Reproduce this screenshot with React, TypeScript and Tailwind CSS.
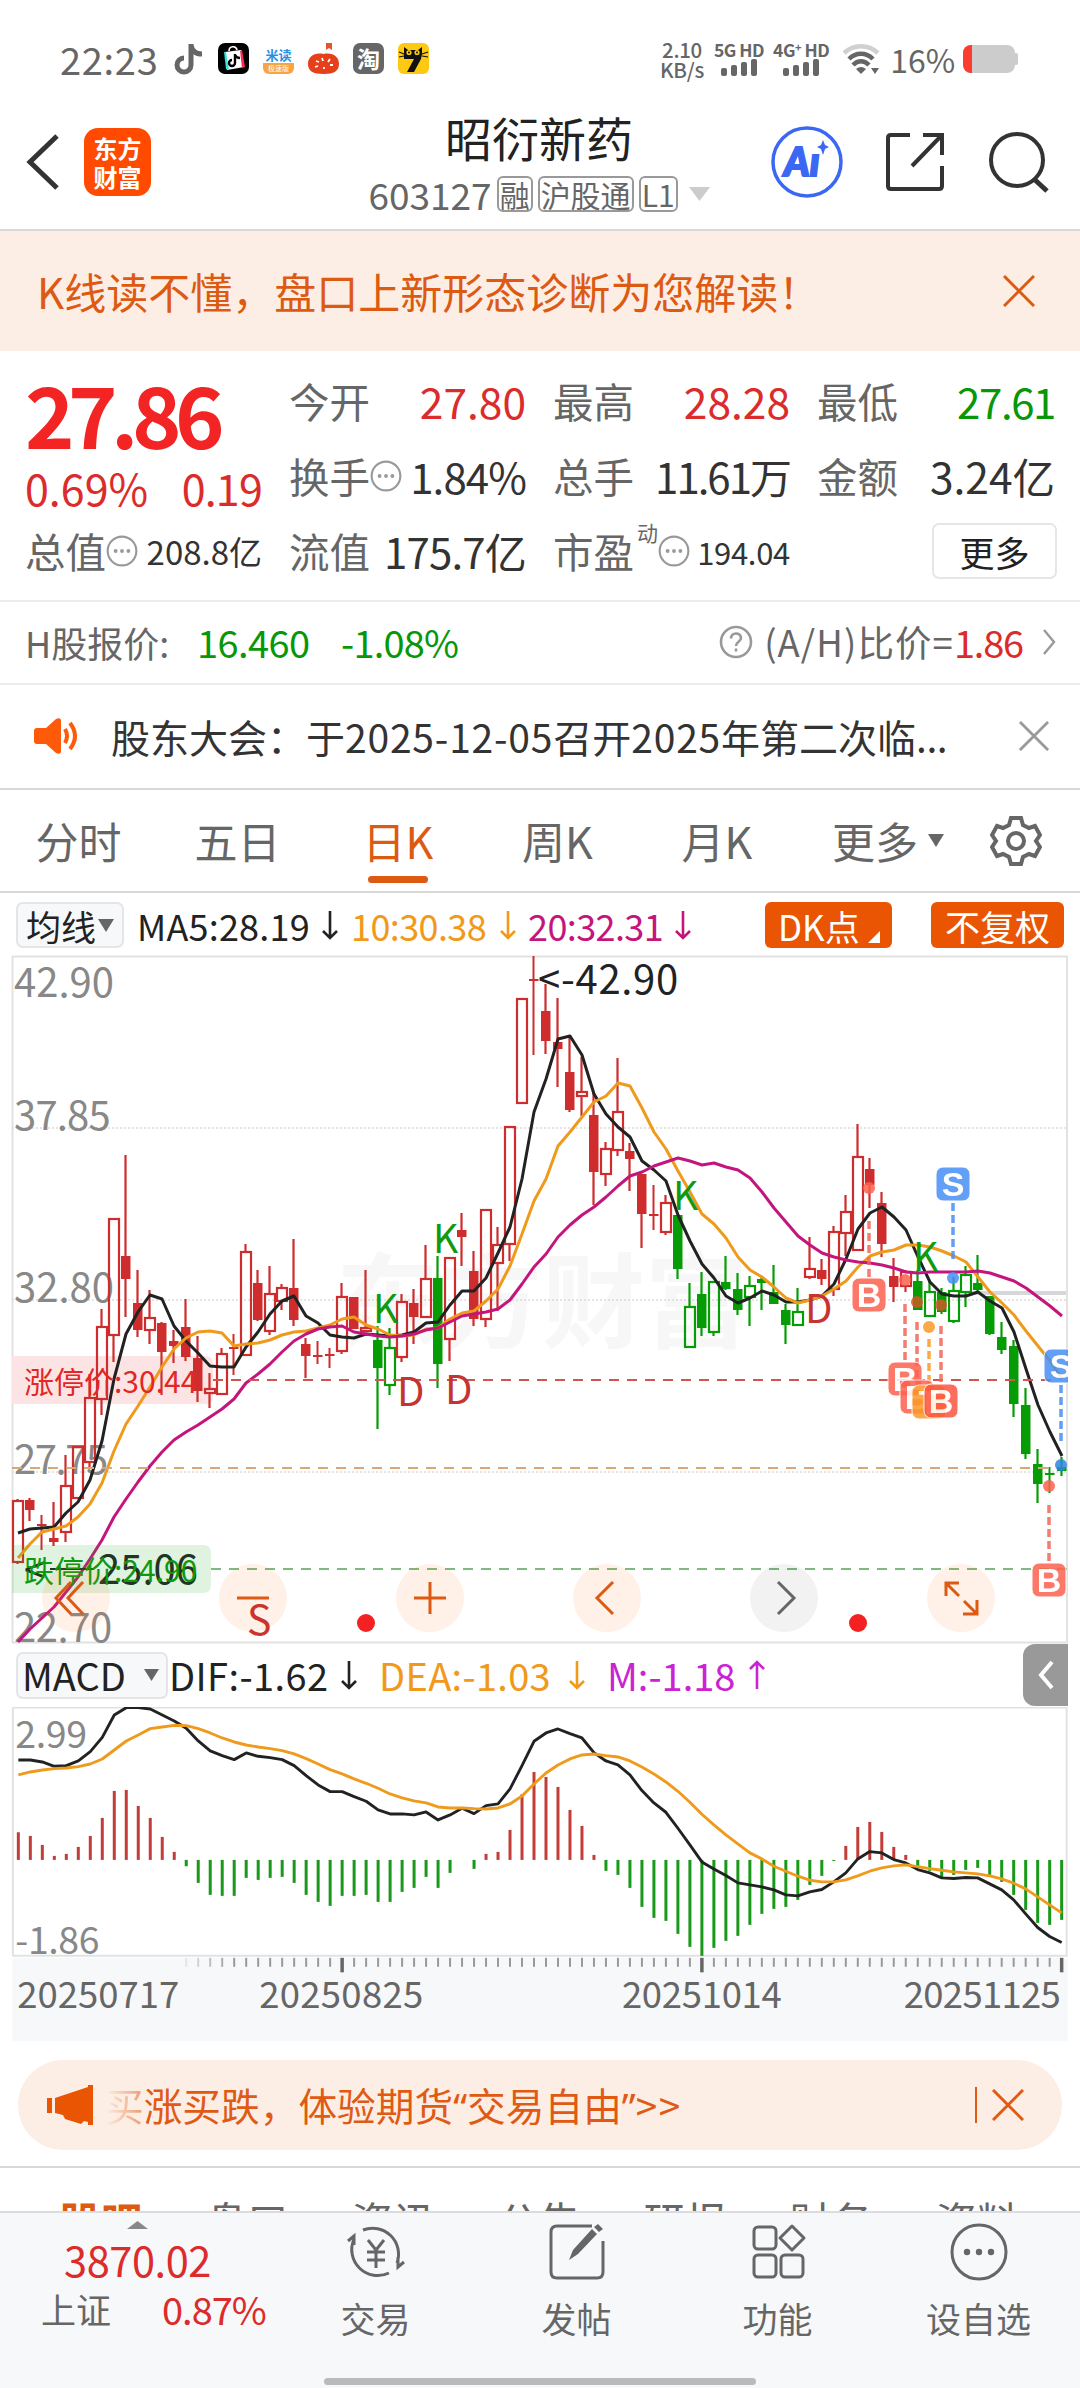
import React from 'react'

type Candle = [string, number, number, number, number]

// kind, high, body top, body bottom, low. Lowercase kinds are hollow bodies, 'x' and 'y' are dojis.
const candles: Candle[] = [
  ['r', 1500, 1502, 1563, 1565], ['R', 1499, 1501, 1511, 1522], ['x', 1516, 1526, 1526, 1551], ['R', 1503, 1539, 1543, 1547],
  ['r', 1456, 1487, 1533, 1543], ['r', 1447, 1448, 1499, 1500], ['r', 1375, 1399, 1463, 1469], ['r', 1310, 1328, 1400, 1416],
  ['r', 1219, 1220, 1336, 1363], ['R', 1156, 1257, 1280, 1318], ['R', 1271, 1304, 1331, 1338], ['r', 1291, 1319, 1331, 1345],
  ['R', 1323, 1324, 1353, 1396], ['R', 1331, 1342, 1347, 1364], ['R', 1300, 1328, 1358, 1362], ['R', 1337, 1359, 1392, 1403],
  ['r', 1374, 1390, 1394, 1409], ['r', 1349, 1355, 1395, 1395], ['x', 1335, 1349, 1349, 1376], ['r', 1245, 1253, 1356, 1356],
  ['R', 1271, 1284, 1321, 1322], ['r', 1267, 1295, 1332, 1336], ['r', 1285, 1289, 1302, 1311], ['R', 1240, 1289, 1321, 1327],
  ['R', 1339, 1345, 1357, 1379], ['x', 1342, 1357, 1357, 1365], ['x', 1349, 1356, 1356, 1369], ['r', 1284, 1298, 1352, 1355],
  ['R', 1298, 1298, 1330, 1330], ['r', 1271, 1329, 1332, 1332], ['G', 1327, 1341, 1369, 1430], ['g', 1329, 1349, 1386, 1396],
  ['r', 1295, 1303, 1358, 1363], ['R', 1290, 1304, 1318, 1345], ['r', 1246, 1280, 1318, 1318], ['G', 1257, 1279, 1365, 1389],
  ['r', 1259, 1259, 1340, 1362], ['R', 1214, 1231, 1238, 1267], ['R', 1252, 1272, 1320, 1327], ['r', 1211, 1211, 1320, 1328],
  ['r', 1228, 1246, 1264, 1312], ['r', 1128, 1128, 1245, 1262], ['r', 1000, 1000, 1104, 1104], ['x', 957, 981, 981, 1056],
  ['R', 985, 1012, 1042, 1055], ['R', 999, 1043, 1050, 1088], ['R', 1038, 1073, 1111, 1113], ['r', 1058, 1093, 1097, 1117],
  ['R', 1093, 1116, 1173, 1206], ['r', 1143, 1150, 1175, 1187], ['r', 1059, 1113, 1151, 1157], ['R', 1144, 1152, 1160, 1192],
  ['R', 1175, 1175, 1215, 1249], ['x', 1186, 1216, 1216, 1231], ['r', 1196, 1204, 1233, 1236], ['G', 1216, 1216, 1270, 1280],
  ['g', 1284, 1308, 1348, 1348], ['G', 1273, 1295, 1329, 1337], ['g', 1282, 1283, 1333, 1337], ['G', 1257, 1283, 1290, 1291],
  ['G', 1274, 1290, 1311, 1316], ['g', 1277, 1287, 1298, 1327], ['G', 1278, 1280, 1284, 1311], ['G', 1266, 1293, 1305, 1305],
  ['G', 1305, 1311, 1326, 1345], ['g', 1289, 1313, 1326, 1326], ['r', 1238, 1270, 1278, 1280], ['R', 1260, 1271, 1280, 1286],
  ['r', 1227, 1233, 1290, 1297], ['r', 1196, 1213, 1234, 1257], ['r', 1125, 1158, 1251, 1251], ['R', 1159, 1170, 1186, 1209],
  ['R', 1193, 1204, 1245, 1258], ['R', 1259, 1277, 1288, 1303], ['r', 1271, 1273, 1287, 1293], ['G', 1271, 1282, 1311, 1311],
  ['g', 1282, 1293, 1317, 1317], ['G', 1289, 1293, 1313, 1315], ['g', 1278, 1292, 1322, 1324], ['g', 1267, 1276, 1293, 1308],
  ['G', 1256, 1284, 1291, 1292], ['G', 1297, 1297, 1335, 1336], ['G', 1323, 1338, 1351, 1355], ['G', 1341, 1347, 1405, 1418],
  ['G', 1389, 1406, 1455, 1460], ['G', 1450, 1465, 1485, 1504], ['y', 1468, 1475, 1475, 1494], ['G', 1458, 1468, 1472, 1477],
]

const ma5 = [
  1534, 1530, 1529, 1528, 1514, 1503, 1481, 1442, 1380, 1335, 1313, 1296, 1300, 1327, 1342, 1354, 1367, 1368, 1368, 1348, 1333, 1315,
  1302, 1297, 1317, 1324, 1336, 1338, 1339, 1335, 1336, 1337, 1336, 1333, 1324, 1323, 1306, 1292, 1292, 1279, 1254, 1228, 1180, 1113,
  1080, 1040, 1037, 1056, 1095, 1115, 1128, 1138, 1162, 1171, 1182, 1216, 1242, 1265, 1279, 1297, 1304, 1299, 1292, 1296, 1303, 1303,
  1301, 1297, 1285, 1260, 1230, 1214, 1208, 1218, 1231, 1258, 1283, 1295, 1297, 1297, 1293, 1302, 1309, 1333, 1370, 1406, 1433, 1457,
]
const ma10 = [
  1559, 1545, 1533, 1530, 1527, 1518, 1505, 1484, 1452, 1425, 1407, 1388, 1368, 1350, 1339, 1333, 1332, 1334, 1347, 1345, 1344, 1341,
  1336, 1333, 1332, 1329, 1326, 1320, 1318, 1326, 1330, 1336, 1337, 1336, 1330, 1329, 1320, 1314, 1312, 1302, 1290, 1267, 1235, 1202,
  1180, 1147, 1133, 1118, 1103, 1097, 1084, 1087, 1109, 1133, 1150, 1172, 1193, 1215, 1225, 1239, 1258, 1271, 1278, 1288, 1299, 1304,
  1301, 1297, 1290, 1282, 1268, 1257, 1253, 1251, 1246, 1246, 1248, 1252, 1257, 1263, 1278, 1293, 1304, 1316, 1332, 1347, 1362, 1380,
]
const ma20 = [
  1643, 1630, 1619, 1608, 1593, 1578, 1560, 1541, 1518, 1500, 1483, 1467, 1453, 1441, 1433, 1426, 1418, 1410, 1400, 1384, 1375, 1365,
  1353, 1342, 1335, 1330, 1328, 1327, 1333, 1335, 1337, 1338, 1337, 1335, 1331, 1329, 1323, 1317, 1315, 1313, 1310, 1301, 1285, 1268,
  1255, 1238, 1226, 1216, 1208, 1198, 1187, 1177, 1173, 1167, 1163, 1159, 1162, 1166, 1164, 1168, 1171, 1179, 1193, 1209, 1223, 1237,
  1246, 1254, 1258, 1261, 1263, 1264, 1266, 1269, 1273, 1274, 1273, 1273, 1273, 1273, 1272, 1274, 1278, 1282, 1289, 1298, 1307, 1317,
]

// MACD series, in thirds of a pixel below y = 1640
const bars = [
  580, 591, 618, 651, 645, 624, 591, 537, 456, 453, 501, 537, 594, 639, 682, 732, 768, 771, 771, 717, 723, 717, 714, 732, 768, 789, 801,
  771, 771, 768, 789, 789, 759, 747, 714, 747, 702, 663, 690, 645, 639, 573, 466, 399, 414, 444, 513, 561, 648, 696, 708, 747, 804, 837,
  846, 885, 924, 951, 927, 906, 891, 858, 825, 810, 804, 783, 738, 711, 666, 621, 564, 549, 579, 624, 648, 684, 696, 717, 708, 693, 687,
  708, 729, 768, 813, 852, 858, 843,
]
const dif = [
  363, 363, 369, 382, 380, 366, 338, 295, 228, 206, 206, 210, 228, 246, 268, 306, 336, 350, 362, 342, 352, 356, 362, 380, 410, 438, 458,
  458, 473, 487, 513, 525, 525, 528, 519, 543, 528, 508, 524, 500, 495, 450, 380, 307, 282, 270, 284, 297, 341, 366, 378, 408, 455, 492,
  520, 568, 618, 669, 690, 710, 732, 738, 744, 753, 768, 771, 759, 752, 729, 702, 660, 638, 642, 662, 672, 692, 702, 717, 719, 716, 717,
  735, 753, 783, 825, 866, 893, 911,
]
const dea = [
  408, 399, 393, 389, 387, 383, 375, 360, 333, 306, 288, 269, 264, 259, 260, 269, 282, 297, 309, 318, 324, 329, 335, 345, 359, 375, 392,
  405, 420, 433, 448, 465, 477, 486, 492, 504, 507, 507, 509, 510, 507, 495, 471, 435, 402, 378, 360, 348, 345, 350, 354, 366, 384, 405,
  429, 457, 490, 526, 558, 588, 615, 642, 660, 682, 697, 712, 724, 729, 729, 723, 711, 697, 687, 681, 678, 683, 689, 694, 699, 702, 705,
  711, 720, 733, 750, 774, 798, 822,
]

const RED = '#cf2d2d'
const GREEN = '#069c06'

const px = (i: number) => 18 + i * 12
const line = (ys: number[]) => ys.map((y, i) => `${px(i)},${y}`).join(' ')
const macdY = (v: number) => 1640 + v / 3

function CandleMark({ c, i }: { c: Candle; i: number }) {
  const [kind, high, top, bottom, low] = c
  const x = px(i)
  const color = kind === 'g' || kind === 'G' || kind === 'y' ? GREEN : RED
  const hollow = kind === 'r' || kind === 'g'
  if (kind === 'x' || kind === 'y') {
    return (
      <g stroke={color} strokeWidth="2">
        <line x1={x - 0.5} x2={x - 0.5} y1={high} y2={low} />
        <line x1={x - 5} x2={x + 4.5} y1={top} y2={top} />
      </g>
    )
  }
  return (
    <g>
      <line x1={x - 0.5} x2={x - 0.5} y1={high} y2={top} stroke={color} strokeWidth="2.200" />
      <line x1={x - 0.5} x2={x - 0.5} y1={bottom} y2={low} stroke={color} strokeWidth="2.200" />
      {hollow ? (
        <rect x={x - 5} y={top} width="10" height={bottom - top} fill="none" stroke={color} strokeWidth="2.200" />
      ) : (
        <rect x={x - 5} y={top} width="9.5" height={bottom - top} fill={color} />
      )}
    </g>
  )
}

function Badge({ x, y, letter, color }: { x: number; y: number; letter: string; color: string }) {
  return (
    <g opacity="0.85">
      <rect x={x - 17} y={y - 17} width="34" height="34" rx="7" fill={color} stroke="#fff" strokeWidth="1" />
      <text x={x} y={y + 12} textAnchor="middle" fontSize="34" fontWeight="700" fontFamily="Liberation Sans" fill="#fff">
        {letter}
      </text>
    </g>
  )
}

function Trail({ x, y1, y2, color }: { x: number; y1: number; y2: number; color: string }) {
  return <line x1={x} x2={x} y1={y1} y2={y2} stroke={color} strokeWidth="3.5" strokeDasharray="8 4" opacity="0.85" />
}

function Close({ className }: { className: string }) {
  return (
    <svg viewBox="0 0 32 32" className={className} fill="none" stroke="currentColor" strokeWidth="3">
      <path d="M1 1L31 31M31 1L1 31" />
    </svg>
  )
}

function Arrow({ up, className }: { up?: boolean; className?: string }) {
  return (
    <svg viewBox="0 0 16 30" className={`h-[30px] w-4 ${className ?? ''}`} fill="none" stroke="currentColor" strokeWidth="2.6">
      {up ? <path d="M8 29V2M1 9L8 2L15 9" /> : <path d="M8 1V28M1 21L8 28L15 21" />}
    </svg>
  )
}

function Triangle({ className }: { className: string }) {
  return (
    <svg viewBox="0 0 16 12" preserveAspectRatio="none" className={className} fill="currentColor">
      <path d="M0 0H16L8 12Z" />
    </svg>
  )
}

function Dots() {
  return (
    <svg viewBox="0 0 32 32" className="-ml-px h-[34px] w-[34px] shrink-0 text-[#999]">
      <circle cx="16" cy="16" r="13.5" fill="none" stroke="currentColor" strokeWidth="2" />
      <circle cx="10" cy="16" r="1.8" fill="currentColor" />
      <circle cx="16" cy="16" r="1.8" fill="currentColor" />
      <circle cx="22" cy="16" r="1.8" fill="currentColor" />
    </svg>
  )
}

function Signal({ label }: { label: React.ReactNode }) {
  return (
    <div className="flex flex-col items-center">
      <span className="text-[17.5px] leading-[18px] font-bold tracking-[-0.5px] whitespace-nowrap">{label}</span>
      <svg viewBox="0 0 36 17" className="h-[17px] w-9" fill="currentColor">
        <rect x="0" y="9" width="6" height="8" rx="2" />
        <rect x="10" y="6" width="6" height="11" rx="2" />
        <rect x="20" y="3" width="6" height="14" rx="2" />
        <rect x="30" y="0" width="6" height="17" rx="2" />
      </svg>
    </div>
  )
}

function StatusBar() {
  return (
    <div className="flex h-[96px] items-center pt-[22px] pl-[60px] text-[#666]">
      <span className="w-[114px] text-[38px] leading-none tracking-[0.7px]">22:23</span>
      <div className="flex items-center gap-[14px]">
        <svg viewBox="0 0 30 32" className="h-8 w-[30px]" fill="none" stroke="currentColor" strokeWidth="5">
          <path d="M17 1V22A7 7 0 1 1 10 15M17 2C18 8 22 11 28 11" />
        </svg>
        <svg viewBox="0 0 31 31" className="h-[31px] w-[31px]">
          <rect width="31" height="31" rx="7" fill="#000" />
          <path d="M7 9L23 7L26 24L9 27Z" fill="#fff" />
          <path d="M6 9L8 26L11 27L8 9Z" fill="#2ee6e0" />
          <path d="M24 7L27 24L24 25L22 8Z" fill="#fb2c56" />
          <path d="M11 8C11 3 18 2 19 7" fill="none" stroke="#fff" strokeWidth="1.6" />
          <path d="M17 11V20A3 3 0 1 1 14 17M17 12C18 14 19 15 22 15" fill="none" stroke="#000" strokeWidth="2.4" />
        </svg>
        <div className="flex h-[31px] w-[31px] flex-col items-center justify-end overflow-hidden rounded-[6px]">
          <span className="text-[13px] leading-[16px] font-bold text-[#2a8de0]">米读</span>
          <span className="h-[11px] w-full bg-[#f9a345] text-center text-[7px] leading-[10px] text-white">极速版</span>
        </div>
        <svg viewBox="0 0 31 31" className="h-[31px] w-[31px]">
          <path d="M18 0H24V7L21 5L18 7Z" fill="#e2542f" />
          <path d="M15.500 11C25 9 31 14 31 21C31 28 26 31 15.500 31C5 31 0 28 0 21C0 14 6 9 15.500 11Z" fill="#e5401b" />
          <path d="M8 18L11 19M7 24L10 23M14 15L15 18M22 16L20 19M25 22L22 22M16 24V26" stroke="#fff" strokeWidth="1.8" />
        </svg>
        <div className="flex h-[31px] w-[31px] items-center justify-center rounded-[7px] bg-[#666] text-[23px] leading-none font-bold text-white">
          淘
        </div>
        <svg viewBox="0 0 31 31" className="h-[31px] w-[31px]">
          <rect width="31" height="31" rx="6" fill="#fdc913" />
          <path d="M6 11H24L23 16L16 29H9L16 16H6Z" fill="#111" />
          <path d="M6 12V4L10 7H20L24 4V12Z" fill="#111" />
          <path d="M1 9L6 11M1 14L6 13M30 9L24 11M30 14L24 13" stroke="#111" strokeWidth="1.200" />
          <circle cx="11" cy="9.500" r="2.600" fill="#fdc913" />
          <circle cx="19" cy="9.500" r="2.600" fill="#fdc913" />
          <circle cx="11" cy="9.500" r="1" fill="#111" />
          <circle cx="19" cy="9.500" r="1" fill="#111" />
        </svg>
      </div>
      <div className="ml-[229px] flex w-[48px] flex-col items-center text-[20.5px] leading-[20px] font-medium tracking-[-0.3px]">
        <span>2.10</span>
        <span>KB/s</span>
      </div>
      <div className="ml-[8px] flex items-start gap-[9px]">
        <Signal label="5G HD" />
        <Signal
          label={
            <>
              4G<sup className="text-[11px]">+</sup> HD
            </>
          }
        />
      </div>
      <svg viewBox="0 0 38 32" className="ml-[13px] h-8 w-[38px]" fill="none" stroke="currentColor" strokeWidth="4.500">
        <path d="M2 10C12 1 26 1 36 10" stroke="#d0d0d0" />
        <path d="M7 16C14 9 24 9 31 16" />
        <path d="M11 22C16 17 22 17 27 22" />
        <path d="M14 26Q19 22 24 26L19 31Z" fill="currentColor" stroke="none" />
        <path d="M29 25H37L33 31Z" fill="currentColor" stroke="none" />
      </svg>
      <span className="ml-[10px] w-[73px] text-[32px] leading-none">16%</span>
      <svg viewBox="0 0 55 28" className="h-7 w-[55px]">
        <rect width="52" height="28" rx="8" fill="#ccc" />
        <rect x="51" y="8" width="4" height="12" rx="2" fill="#ccc" />
        <path d="M9 0V28H8A8 8 0 0 1 0 20V8A8 8 0 0 1 8 0Z" fill="#fb3c30" />
      </svg>
    </div>
  )
}

function Chip({ children }: { children: string }) {
  return (
    <span className="flex h-9 shrink-0 items-center rounded-[6px] border-2 border-[#999] px-px text-[30px] leading-none whitespace-nowrap">
      {children}
    </span>
  )
}

function Header() {
  return (
    <header className="flex h-[135px] items-center border-b-2 border-[#d8d8d4] pl-[26px]">
      <svg viewBox="0 0 34 56" className="h-14 w-[34px]" fill="none" stroke="#333" strokeWidth="5">
        <path d="M31 2L4 28L31 54" />
      </svg>
      <div className="ml-6 flex h-[68px] w-[67px] flex-col items-center justify-center rounded-[14px] bg-[#ff4a00] text-[24px] leading-[29px] font-bold text-white">
        <span>东方</span>
        <span>财富</span>
      </div>
      <div className="ml-[211px] flex w-[354px] flex-col items-center pt-1">
        <h1 className="text-[47px] leading-[60px] text-[#222]">昭衍新药</h1>
        <div className="flex h-[54px] items-center gap-[5px] text-[#666]">
          <span className="text-[37px] leading-none">603127</span>
          <Chip>融</Chip>
          <Chip>沪股通</Chip>
          <Chip>L1</Chip>
          <Triangle className="ml-[6px] h-[14px] w-[21px] text-[#ccc]" />
        </div>
      </div>
      <svg viewBox="0 0 74 74" className="ml-[54px] h-[74px] w-[74px] shrink-0">
        <circle cx="37" cy="37" r="34" fill="none" stroke="#3a68f2" strokeWidth="3.5" />
        <text x="14" y="51" fontSize="39" fontWeight="900" fontStyle="italic" fontFamily="Lato" fill="#3a68f2" stroke="#3a68f2" strokeWidth="2">
          Aı
        </text>
        <path d="M53 15L55 20L59 22L55 24L53 30L51 24L47 22L51 20Z" fill="#3a68f2" />
      </svg>
      <svg viewBox="0 0 60 60" className="ml-[41px] h-[60px] w-[60px]" fill="none" stroke="#333" strokeWidth="4">
        <path d="M25 3H6Q3 3 3 6V54Q3 57 6 57H54Q57 57 57 54V34" />
        <path d="M38 3H57V23M57 3L27 34" />
      </svg>
      <svg viewBox="0 0 62 62" className="ml-[43px] h-[62px] w-[62px]" fill="none" stroke="#333" strokeWidth="4">
        <circle cx="29" cy="29" r="26" />
        <path d="M46 48L59 60" strokeWidth="5" />
      </svg>
    </header>
  )
}

function Field({ label, value, tone = 'text-[#333]', size = 'text-[42.5px]', info, mark }: {
  label: string
  value: string
  tone?: string
  size?: string
  info?: boolean
  mark?: string
}) {
  return (
    <div className="flex h-[75px] items-center whitespace-nowrap">
      <span className="text-[40.5px] leading-none text-[#666]">{label}</span>
      {mark && <span className="mb-[38px] ml-[3px] text-[21px] leading-none text-[#666]">{mark}</span>}
      {info && <Dots />}
      <span className={`ml-auto leading-none ${size} ${tone}`}>{value}</span>
    </div>
  )
}

function Quote() {
  return (
    <section className="grid h-[251px] grid-cols-[237px_237px_237px_238px] gap-x-[27px] border-b-2 border-[#ececec] px-[25px] pt-[13px]">
      <div>
        <div className="flex h-[98px] items-center text-[84px] leading-none font-bold tracking-[-6.5px] text-[#f22424]">27.86</div>
        <div className="flex h-[52px] items-center justify-between text-[43px] leading-none text-[#dc2b2b]">
          <span>0.69%</span>
          <span className="tracking-[-0.8px]">0.19</span>
        </div>
        <Field label="总值" value="208.8亿" size="text-[33px]" info />
      </div>
      <div>
        <Field label="今开" value="27.80" tone="text-[#dc2b2b]" />
        <Field label="换手" value="1.84%" size="text-[42px] tracking-[-0.9px]" info />
        <Field label="流值" value="175.7亿" size="text-[42px] tracking-[-0.8px]" />
      </div>
      <div>
        <Field label="最高" value="28.28" tone="text-[#dc2b2b]" />
        <Field label="总手" value="11.61万" size="text-[42px] tracking-[-2px]" />
        <Field label="市盈" mark="动" value="194.04" size="text-[31px] tracking-[-0.3px]" info />
      </div>
      <div>
        <Field label="最低" value="27.61" tone="text-[#089708]" size="text-[42px] tracking-[-1.4px]" />
        <Field label="金额" value="3.24亿" />
        <div className="flex h-[75px] items-center justify-end">
          <button className="-mr-[2px] h-14 w-[125px] rounded-[7px] border-2 border-[#e6e6e8] text-[35px] leading-none text-[#222]">更多</button>
        </div>
      </div>
    </section>
  )
}

function Notices() {
  return (
    <>
      <div className="flex h-[83px] items-center border-b-2 border-[#ececec] pr-[24px] pl-[25px] text-[36.5px] leading-none">
        <span className="w-[172px] text-[36px] text-[#666]">H股报价:</span>
        <span className="w-[144px] text-[38px] tracking-[-0.6px] text-[#089708]">16.460</span>
        <span className="text-[38px] tracking-[-0.8px] text-[#089708]">-1.08%</span>
        <svg viewBox="0 0 34 34" className="mr-[11px] ml-auto h-[34px] w-[34px] text-[#999]" fill="none" stroke="currentColor" strokeWidth="2.6">
          <circle cx="17" cy="17" r="15" />
          <path d="M12 13.500C12 7 22 7 22 13C22 17 17 16.500 17 21M17 23.500V26.500" />
        </svg>
        <span className="tracking-[1.1px] text-[#666]">(A/H)比价=</span>
        <span className="text-[38px] tracking-[-1.2px] text-[#dc2b2b]">1.86</span>
        <svg viewBox="0 0 14 26" className="ml-[19px] h-[26px] w-[14px]" fill="none" stroke="#999" strokeWidth="2.4">
          <path d="M2 1L12 13L2 25" />
        </svg>
      </div>
      <div className="flex h-[105px] items-center border-b-2 border-[#d8d8d8] pr-[31px] pl-[34px]">
        <svg viewBox="0 0 44 38" className="h-[38px] w-11" fill="#ff5a0a">
          <path d="M3 11H12L22 2Q27 0 27 4V34Q27 38 22 36L12 27H3Q0 27 0 24V14Q0 11 3 11Z" />
          <path d="M31 12Q35 19 31 26M36 6Q46 19 36 32" fill="none" stroke="#ff5a0a" strokeWidth="4" />
        </svg>
        <span className="ml-[33px] text-[39px] leading-none whitespace-nowrap text-[#333]">
          股东大会：于<span className="tracking-[0.8px]">2025-12-05</span>召开<span className="tracking-[0.8px]">2025</span>年第二次临
          <span className="tracking-[-0.5px]">...</span>
        </span>
        <Close className="ml-auto h-[30px] w-[30px] text-[#999]" />
      </div>
    </>
  )
}

function PeriodTabs() {
  return (
    <nav className="flex h-[104px] items-center border-b-2 border-[#d8d8d8] text-[43px] leading-none text-[#666]">
      <span className="w-[157px] text-center">分时</span>
      <span className="w-[161px] text-center">五日</span>
      <span className="relative w-[160px] text-center text-[#dc5a12]">
        日K
        <span className="absolute top-[57px] left-[50px] h-[7px] w-[60px] rounded-full bg-[#dc5a12]" />
      </span>
      <span className="w-[159px] text-center">周K</span>
      <span className="w-[160px] text-center">月K</span>
      <span className="ml-[35px]">更多</span>
      <Triangle className="ml-[10px] h-[13px] w-4" />
      <svg viewBox="0 0 52 52" className="ml-[46px] h-[52px] w-[52px]" fill="none" stroke="currentColor" strokeWidth="4">
        <path d="M21 3H31L33 10L39 13L45 11L50 20L46 26L50 32L45 41L39 39L33 42L31 49H21L19 42L13 39L7 41L2 32L6 26L2 20L7 11L13 13L19 10Z" />
        <circle cx="26" cy="26" r="8" />
      </svg>
    </nav>
  )
}

function MaRow() {
  return (
    <div className="flex h-16 items-center pr-4 pl-4 text-[36px] leading-none whitespace-nowrap">
      <span className="flex h-[46px] w-[108px] items-center rounded-[7px] border-2 border-[#e4e5e8] bg-[#f7f8fa] pl-[8px] text-[35px] text-[#222]">
        均线
        <Triangle className="ml-[2px] h-[13px] w-[16px] text-[#666]" />
      </span>
      <span className="ml-[13px] w-[185px] tracking-[0.2px] text-[#222]">MA5:28.19</span>
      <Arrow className="text-[#222]" />
      <span className="ml-[13px] w-[149px] tracking-[-0.6px] text-[#f0991a]">10:30.38</span>
      <Arrow className="text-[#f0991a]" />
      <span className="ml-[12px] w-[147px] tracking-[-0.6px] text-[#c4157d]">20:32.31</span>
      <Arrow className="text-[#c4157d]" />
      <span className="ml-auto flex h-[46px] w-[127px] items-center rounded-[6px] bg-[#ea5504] pl-[13px] text-[35px] text-white">
        DK点
        <svg viewBox="0 0 12 12" className="mt-[24px] ml-[8px] h-[12px] w-[12px] shrink-0" fill="#fff">
          <path d="M12 0V12H0Z" />
        </svg>
      </span>
      <span className="ml-[39px] flex h-[46px] w-[133px] items-center justify-center rounded-[6px] bg-[#ea5504] text-[35px] text-white">不复权</span>
    </div>
  )
}

function KChart() {
  return (
    <div className="relative h-[686px]">
      <svg viewBox="0 958 1080 686" className="block h-[686px] w-[1080px] overflow-visible">
        <clipPath id="plot">
          <rect x="12" y="957" width="1056" height="687" />
        </clipPath>
        <text x="336" y="1341" fontSize="103" fontWeight="700" fill="#f7f7f7">东方财富</text>
        <g stroke="#e2e2e2" strokeWidth="2">
          <path d="M12.500 957V1644M1067 957V1644M12 957.500H1068M12 1643.500H1068" fill="none" />
        </g>
        <g stroke="#dcdcdc" strokeWidth="1.500" strokeDasharray="2 2">
          <path d="M12 1129H1068M12 1301H1068M12 1473H1068" />
        </g>
        <path d="M972 1294H1066" stroke="#d5d7db" strokeWidth="4" />

        <g fontSize="40" fill="#888">
          <text x="14" y="998">42.90</text>
          <text x="14" y="1131" letterSpacing="-0.8">37.85</text>
          <text x="14" y="1303">32.80</text>
          <text x="14" y="1475" letterSpacing="-1.400">27.75</text>
          <text x="14" y="1643" letterSpacing="-0.4">22.70</text>
        </g>

        <path d="M12 1357H205Q213 1357 213 1365V1397Q213 1405 205 1405H12Z" fill="#fde4e4" />
        {candles.map((c, i) => (
          <CandleMark key={i} c={c} i={i} />
        ))}

        <g fill="none" strokeWidth="3" strokeLinejoin="round">
          <polyline points={line(ma5)} stroke="#222" />
          <polyline points={line(ma10)} stroke="#f09a1c" />
          <polyline points={line(ma20)} stroke="#c4157d" />
        </g>

        <text x="24" y="1585" fontSize="39" fill="#222">&lt;</text>
        <path d="M50 1570H94" stroke="#222" strokeWidth="2" />
        <text x="98" y="1585" fontSize="40" fill="#222">25.06</text>
        <text x="538" y="995" fontSize="40" letterSpacing="0.7" fill="#222">&lt;-42.90</text>

        <path d="M213 1381H1056" stroke="#cf5550" strokeWidth="2" strokeDasharray="10 8" />
        <path d="M12 1469H1056" stroke="#d9a873" strokeWidth="2" strokeDasharray="10 8" />
        <path d="M211 1570H1068" stroke="#7fb97f" strokeWidth="2" strokeDasharray="10 8" />
        <path d="M12 1546H203Q211 1546 211 1554V1586Q211 1594 203 1594H12Z" fill="#22aa22" fillOpacity="0.14" />
        <text x="24" y="1394" fontSize="30" fill="#e32626">涨停价:30.44</text>
        <text x="24" y="1583" fontSize="30" fill="#0d9a0d">跌停价:24.90</text>

        <g fontSize="39" fill="#0f9a0f">
          <text x="373" y="1324">K</text>
          <text x="433" y="1254">K</text>
          <text x="673" y="1211">K</text>
          <text x="913" y="1272">K</text>
        </g>
        <g fontSize="40" fill="#c43430">
          <text x="397" y="1407">D</text>
          <text x="445" y="1405">D</text>
          <text x="805" y="1324">D</text>
        </g>

        <g clipPath="url(#plot)">
          <Trail x={869} y1={1222} y2={1279} color="#f26758" />
          <Trail x={905} y1={1305} y2={1362} color="#f26758" />
          <Trail x={917} y1={1323} y2={1381} color="#f26758" />
          <Trail x={929} y1={1340} y2={1386} color="#fd9a28" />
          <Trail x={941} y1={1327} y2={1384} color="#f26758" />
          <Trail x={953} y1={1204} y2={1260} color="#478ff5" />
          <Trail x={1049} y1={1506} y2={1562} color="#f26758" />
          <Trail x={1061} y1={1386} y2={1442} color="#478ff5" />
          <g opacity="0.85">
            <circle cx="869" cy="1189" r="6" fill="#fc6150" />
            <circle cx="905" cy="1281" r="6" fill="#fc6150" />
            <circle cx="917" cy="1303" r="6" fill="#cf5a26" />
            <circle cx="929" cy="1328" r="6" fill="#fd9a28" />
            <circle cx="941" cy="1306" r="6" fill="#cf5a26" />
            <circle cx="953" cy="1279" r="6" fill="#478ff5" />
            <circle cx="1049" cy="1487" r="6" fill="#fc6150" />
            <circle cx="1061" cy="1466" r="6" fill="#2d86e0" />
          </g>
          <Badge x={869} y={1296} letter="B" color="#fc6150" />
          <Badge x={905} y={1380} letter="B" color="#fc6150" />
          <Badge x={917} y={1398} letter="B" color="#fc6150" />
          <Badge x={929} y={1403} letter="T" color="#fd9a28" />
          <Badge x={941} y={1402} letter="B" color="#fc5540" />
          <Badge x={953} y={1185} letter="S" color="#478ff5" />
          <Badge x={1049} y={1581} letter="B" color="#fc6150" />
          <Badge x={1061} y={1367} letter="S" color="#478ff5" />
        </g>
      </svg>

      <div className="absolute top-[607px] left-[42px] flex gap-[109px]">
        {['M29 18L14 34L29 50M41 18L26 34L41 50', 'M18 34H50', 'M34 18V50M18 34H50', 'M40 18L24 34L40 50', 'M28 18L44 34L28 50', 'M32 19H19V32M19 19L32 32M36 50H50V36M50 50L37 37'].map(
          (d, i) => (
            <svg key={i} viewBox="0 0 68 68" className="h-[68px] w-[68px]" fill="none" strokeWidth="3">
              <circle cx="34" cy="34" r="34" fill={i === 4 ? '#222222' : '#ff6a1a'} fillOpacity={i === 4 ? 0.06 : 0.1} />
              <path d={d} stroke={i === 4 ? '#666' : '#dc5a12'} />
            </svg>
          ),
        )}
      </div>
      <span className="absolute top-[640px] left-[247px] text-[41px] leading-none text-[#cc332e]">S</span>
      <span className="absolute top-[657px] left-[357px] h-[18px] w-[18px] rounded-full bg-[#f32121]" />
      <span className="absolute top-[657px] left-[849px] h-[18px] w-[18px] rounded-full bg-[#f32121]" />
    </div>
  )
}

function MacdRow() {
  return (
    <div className="flex h-16 items-center pr-3 pl-[16px] text-[38px] leading-none whitespace-nowrap">
      <span className="flex h-[47px] w-[152px] items-center rounded-[7px] border-2 border-[#e4e5e8] bg-[#f7f8fa] pl-[4px] text-[38px] text-[#222]">
        MACD
        <Triangle className="ml-auto mr-[7px] h-[12px] w-[15px] shrink-0 text-[#666]" />
      </span>
      <span className="ml-px w-[172px] tracking-[0.4px] text-[#222]">DIF:-1.62</span>
      <Arrow className="text-[#222]" />
      <span className="ml-[22px] w-[190px] tracking-[0.3px] text-[#f0991a]">DEA:-1.03</span>
      <Arrow className="text-[#f0991a]" />
      <span className="ml-[22px] w-[142px] text-[#cb22d2]">M:-1.18</span>
      <Arrow up className="text-[#cb22d2]" />
      <span className="ml-auto flex h-[62px] w-[45px] items-center justify-center rounded-l-[12px] bg-[#999]">
        <svg viewBox="0 0 16 30" className="h-[30px] w-4" fill="none" stroke="#fff" strokeWidth="4">
          <path d="M14 2L3 15L14 28" />
        </svg>
      </span>
    </div>
  )
}

function MacdChart() {
  return (
    <svg viewBox="0 1708 1080 334" className="block h-[334px] w-[1080px]">
      <rect x="12" y="1959" width="1056" height="83" fill="#f7f8fa" />
      <path d="M12.500 1707V1957M1067 1707V1957M12 1708.500H1068M12 1957H1068" stroke="#e2e2e2" strokeWidth="2" />
      <g fontSize="37.500" fill="#888" letterSpacing="-0.4">
        <text x="15" y="1749">2.99</text>
        <text x="15" y="1955">-1.86</text>
      </g>
      {bars.map((v, i) => (
        <line key={i} x1={px(i)} x2={px(i)} y1={1861} y2={macdY(v)} stroke={v < 663 ? '#c23c38' : '#1a981a'} strokeWidth="3" />
      ))}
      <g fill="none" strokeWidth="2.9" strokeLinejoin="round">
        <polyline points={dif.map((v, i) => `${px(i)},${macdY(v)}`).join(' ')} stroke="#222" />
        <polyline points={dea.map((v, i) => `${px(i)},${macdY(v)}`).join(' ')} stroke="#f09a1c" />
      </g>
      {bars.map((_, i) => {
        if (i < 14) return null
        const major = i % 30 === 27
        return (
          <line
            key={i}
            x1={px(i)}
            x2={px(i)}
            y1={1959}
            y2={major ? 1973.5 : 1968}
            stroke={major ? '#666' : '#999'}
            strokeWidth={major ? 3.5 : 2}
            opacity={Math.min(1, (i - 13) / 5)}
          />
        )
      })}
      <g fontSize="36.500" fill="#666">
        <text x="17" y="2009">20250717</text>
        <text x="259" y="2009" letterSpacing="0.3">20250825</text>
        <text x="622" y="2009" letterSpacing="-0.3">20251014</text>
        <text x="904" y="2009" letterSpacing="-0.7">20251125</text>
      </g>
    </svg>
  )
}

function Promo() {
  return (
    <div className="mx-[18px] mt-[19px] flex h-[90px] items-center rounded-full bg-[#fceee5] pr-[38px] pl-[29px] text-[#e05a14]">
      <svg viewBox="0 0 46 40" className="h-10 w-[46px]" fill="#ea5504">
        <path d="M0 13H5V28H0ZM8 13L41 2V0H46V40H41V37L37 36L34 39L18 34L16 30L8 28Z" />
      </svg>
      <span className="ml-[12px] text-[38.7px] leading-none whitespace-nowrap">
        <span className="bg-gradient-to-r from-[#fceee5] to-[#e99a6d] bg-clip-text text-transparent">买</span>
        涨买跌，体验期货<span className="font-['Noto_Sans']">“</span>交易自由<span className="font-['Noto_Sans']">”</span>
        <span className="tracking-[1.5px]">&gt;&gt;</span>
      </span>
      <span className="ml-auto h-9 w-[2px] bg-[#e05a14]" />
      <Close className="ml-[15px] h-8 w-8" />
    </div>
  )
}

function BottomBar() {
  const items = [
    {
      label: '交易',
      icon: (
        <>
          <path d="M18 9A26 26 0 0 1 52 42M44 52A26 26 0 0 1 9 18M3 20L9 15L9 24M59 41L53 46L53 36" />
          <path d="M23 19L31 29L39 19M31 29V47M22 31H40M22 39H40" />
        </>
      ),
    },
    {
      label: '发帖',
      icon: (
        <>
          <path d="M46 5H11Q5 5 5 11V51Q5 57 11 57H51Q57 57 57 51V20" />
          <path d="M23 39L27 29L46 8L51 13L32 33ZM48 6L52 3L57 8L53 11Z" fill="#666" stroke="none" />
        </>
      ),
    },
    {
      label: '功能',
      icon: (
        <>
          <rect x="7" y="6" width="22" height="22" rx="4" />
          <rect x="7" y="34" width="22" height="22" rx="4" />
          <rect x="34" y="34" width="22" height="22" rx="4" />
          <path d="M45 5L57 17L45 29L33 17Z" strokeLinejoin="round" />
        </>
      ),
    },
    {
      label: '设自选',
      icon: (
        <>
          <circle cx="31" cy="31" r="27" />
          <g fill="#666" stroke="none">
            <circle cx="19" cy="31" r="3.200" />
            <circle cx="31" cy="31" r="3.200" />
            <circle cx="43" cy="31" r="3.200" />
          </g>
        </>
      ),
    },
  ]
  return (
    <footer className="flex h-[177px] flex-col border-t-2 border-[#dcdcde] bg-[#f7f8fa]">
      <div className="flex h-[163px]">
        <div className="flex w-[275px] flex-col items-center">
          <Triangle className="mt-2 h-2 w-[21px] rotate-180 text-[#888]" />
          <span className="mt-[10px] text-[41.5px] leading-none tracking-[-0.4px] text-[#dc2b2b]">3870.02</span>
          <div className="mt-[9px] flex w-[275px] items-center pl-[41px] leading-none">
            <span className="w-[121px] text-[35px] text-[#666]">上证</span>
            <span className="text-[38px] tracking-[-1px] text-[#dc2b2b]">0.87%</span>
          </div>
        </div>
        {items.map((item) => (
          <div key={item.label} className="flex w-[201px] flex-col items-center pt-2 text-[35px] leading-none text-[#666]">
            <svg viewBox="0 0 62 62" className="h-[62px] w-[62px]" fill="none" stroke="#666" strokeWidth="3">
              {item.icon}
            </svg>
            <span className="mt-[17px]">{item.label}</span>
          </div>
        ))}
      </div>
      <div className="mx-auto mt-[2px] h-[7px] w-[432px] rounded-full bg-[#b9babc]" />
    </footer>
  )
}

export default function App() {
  return (
    <main className="flex h-[2388px] w-[1080px] flex-col overflow-hidden bg-white font-['Noto_Sans_CJK_SC',sans-serif]">
      <StatusBar />
      <Header />
      <div className="flex h-[120px] items-center bg-[#fceee5] pr-[45px] pl-[37px] text-[#dc5a12]">
        <span className="text-[42px] leading-none whitespace-nowrap">K线读不懂，盘口上新形态诊断为您解读！</span>
        <Close className="ml-auto h-8 w-8" />
      </div>
      <Quote />
      <Notices />
      <PeriodTabs />
      <MaRow />
      <KChart />
      <MacdRow />
      <MacdChart />
      <Promo />
      <div className="mt-4 flex h-[45px] shrink-0 overflow-hidden border-t-2 border-[#d8d8d8] pt-[32px] pl-[28px] text-[41.5px] leading-[40px] text-[#666]">
        <span className="w-[146px] text-center font-bold text-[#dc5a12]">股吧</span>
        {['盘口', '资讯', '公告', '研报', '财务', '资料'].map((t) => (
          <span key={t} className="w-[146px] text-center">{t}</span>
        ))}
      </div>
      <BottomBar />
    </main>
  )
}
